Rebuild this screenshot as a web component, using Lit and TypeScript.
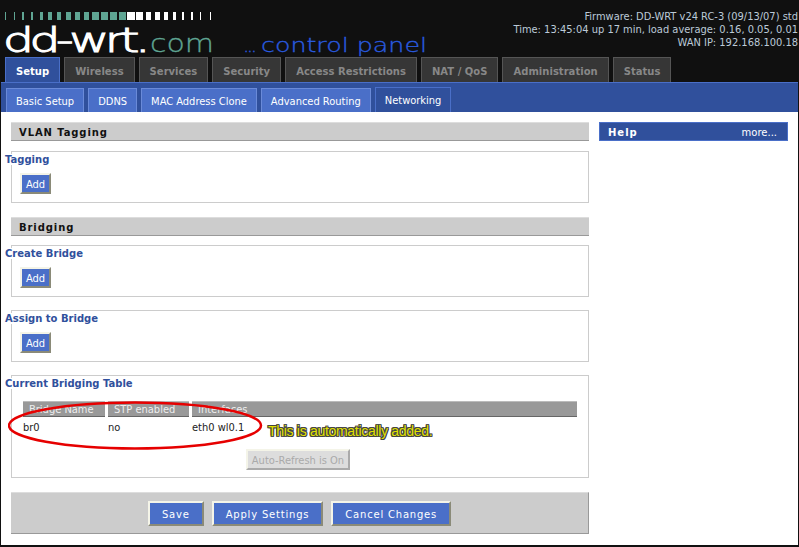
import { LitElement, html, css, svg } from "lit";
import { customElement } from "lit/decorators.js";

const mainTabs = ["Setup", "Wireless", "Services", "Security", "Access Restrictions", "NAT / QoS", "Administration", "Status"];
const subTabs = ["Basic Setup", "DDNS", "MAC Address Clone", "Advanced Routing", "Networking"];

// x, width of the ticks above the logo
const ticks = [
  [5, 1], [14, 1], [22, 2], [31, 2], [40, 3], [48, 4], [57, 4], [66, 5], [75, 5], [84, 5], [92, 7], [101, 7], [110, 7], [119, 7],
  [127, 8], [136, 7], [146, 5], [155, 5], [164, 4], [173, 3], [182, 2], [191, 2], [200, 1], [210, 1],
];

@customElement("app-root")
export class AppRoot extends LitElement {
  static styles = css`
    :host {
      display: block;
      width: 799px;
      height: 547px;
      box-sizing: border-box;
      overflow: hidden;
      background: #111;
      font-family: "DejaVu Sans", Verdana, sans-serif;
      font-size: 10px;
      color: #222;
    }

    .header {
      height: 82px;
      background: #101010;
      position: relative;
    }

    .logo {
      position: absolute;
      left: 0;
      top: 0;
    }

    .info {
      position: absolute;
      right: 1px;
      top: 10px;
      text-align: right;
      color: #bccad8;
      font-stretch: condensed;
      font-size: 11px;
      line-height: 13px;
    }

    .main-tabs {
      position: absolute;
      left: 5px;
      bottom: 0;
      display: flex;
      gap: 4px;
      align-items: flex-end;
    }

    .main-tab {
      height: 24px;
      padding: 0 10px;
      line-height: 27px;
      background: #363636;
      border: 1px solid #555;
      border-bottom: none;
      font-weight: bold;
      font-size: 10px;
      letter-spacing: 0.02px;
      color: #888;
      white-space: nowrap;
    }

    .main-tab.active {
      background: #30509c;
      border-color: #4a6fc8;
      color: #fff;
    }

    .page {
      margin: 0 1px 2px 1px;
      height: 463px;
      background: #fff;
    }

    .sub-band {
      padding: 5px 0 0 5px;
      box-sizing: border-box;
      height: 30px;
      background: #30509c;
      border-top: 1px solid #4a6fc8;
      display: flex;
      gap: 4px;
      align-items: flex-end;
    }

    .sub-tab {
      height: 23px;
      padding: 0 9px;
      line-height: 26px;
      background: #4a6fc8;
      border: 1px solid #6a8ad8;
      border-bottom: none;
      color: #fff;
      font-stretch: condensed;
      font-size: 11px;
      white-space: nowrap;
    }

    .sub-tab.active {
      background: #30509c;
      border-color: #4a6fc8;
      height: 24px;
    }

    .body {
      display: flex;
      position: relative;
      padding: 10px 10px 0 10px;
    }

    .main {
      width: 578px;
    }

    .side {
      width: 189px;
      margin-left: 10px;
    }

    .help {
      height: 19px;
      box-sizing: border-box;
      border: 1px solid #4a6fc8;
      background: #30509c;
      color: #fff;
      display: flex;
      justify-content: space-between;
      align-items: center;
      padding: 1px 10px 0 8px;
    }

    .help b {
      font-size: 10px;
      letter-spacing: 1px;
    }

    .heading {
      height: 19px;
      box-sizing: border-box;
      background: #ccc;
      border-top: 1px solid #ddd;
      border-bottom: 1px solid #999;
      padding-left: 8px;
      line-height: 19px;
      font-size: 10px;
      font-weight: bold;
      letter-spacing: 0.9px;
      color: #111;
    }

    .heading.second {
      margin-top: 14px;
    }

    .group {
      border: 1px solid #ccc;
      margin-top: 9px;
      height: 52px;
      box-sizing: border-box;
      padding-top: 2px;
    }

    .group.first {
      margin-top: 10px;
    }

    .group.spaced {
      margin-top: 13px;
    }

    .group.tall {
      height: 103px;
    }

    .legend {
      width: fit-content;
      margin-left: -7px;
      padding-right: 2px;
      background: #fff;
      color: #30509c;
      font-size: 10px;
      font-weight: bold;
      line-height: 11px;
    }

    .btn {
      display: block;
      box-sizing: border-box;
      background: #4a6fc8;
      color: #fff;
      border: 2px solid;
      border-color: #f4f4e8 #8a8a78 #8a8a78 #f4f4e8;
      font: inherit;
      padding: 1px 0 0;
    }

    .add {
      width: 31px;
      height: 21px;
      margin: 8px 0 0 8px;
      font-stretch: condensed;
      font-size: 11px;
    }

    table {
      border-collapse: separate;
      border-spacing: 3px 0;
      margin: 12px 0 0 8px;
      width: 560px;
      table-layout: fixed;
    }

    .col-name {
      width: 82px;
    }

    .col-stp {
      width: 81px;
    }

    th {
      height: 16px;
      padding: 0 0 0 6px;
      box-sizing: border-box;
      background: #999;
      color: #eee;
      border-top: 1px solid #bbb;
      border-bottom: 1px solid #666;
      font-stretch: condensed;
      font-size: 11px;
      font-weight: normal;
      text-align: left;
    }

    td {
      height: 20px;
      padding: 0;
      font-stretch: condensed;
      font-size: 11px;
      color: #222;
    }

    .refresh {
      width: 104px;
      height: 21px;
      margin: 12px 0 0 234px;
      background: #ddd;
      color: #aaa;
      border-color: #f4f4e8 #aaa #aaa #f4f4e8;
      font-stretch: condensed;
      font-size: 11px;
    }

    .footer {
      height: 42px;
      margin-top: 14px;
      padding-top: 1px;
      box-sizing: border-box;
      background: #ccc;
      border-top: 1px solid #ddd;
      border-bottom: 1px solid #999;
      border-right: 1px solid #999;
      display: flex;
      justify-content: center;
      gap: 8px;
      align-items: center;
    }

    .footer .btn {
      height: 25px;
      padding: 1px 12px 0;
      font-size: 10px;
      letter-spacing: 0.8px;
    }

    .ellipse {
      position: absolute;
      left: 7px;
      top: 288px;
    }

    .note {
      position: absolute;
      left: 267px;
      top: 311px;
      font-family: "Liberation Sans", Arial, sans-serif;
      font-size: 14px;
      letter-spacing: -0.3px;
      color: #e0e000;
      text-shadow: -1px 0 #444, 1px 0 #444, 0 -1px #444, 0 1px #444, 1px 1px #444, -1px -1px #444, 1px -1px #444, -1px 1px #444;
      white-space: nowrap;
    }
  `;

  private _logo() {
    return svg`
      <svg class="logo" width="440" height="60" xmlns="http://www.w3.org/2000/svg" font-family="DejaVu Sans" font-weight="200">
        ${ticks.map(
          ([x, w], i) => svg`<rect x=${x} y="12" width=${w} height="8" fill=${i < 14 ? "#5fa593" : "#fff"}></rect>`,
        )}
        <text transform="translate(3 52) scale(1.48 1)" font-size="33" letter-spacing="-3" fill="#fff" stroke="#fff" stroke-width="1.1">dd-wrt.</text>
        <text transform="translate(150 52) scale(1.25 1)" font-size="24" fill="#5fa593" stroke="#5fa593" stroke-width="0.3">com</text>
        <text x="243" y="52" font-size="20" letter-spacing="-2.5" fill="#2a5ce0" stroke="#2a5ce0" stroke-width="0.3">...</text>
        <text x="261" y="52" font-size="20" fill="#2a5ce0" stroke="#2a5ce0" stroke-width="0.3" textLength="166" lengthAdjust="spacingAndGlyphs">control panel</text>
      </svg>
    `;
  }

  render() {
    return html`
      <div class="header">
        ${this._logo()}
        <div class="info">
          Firmware: DD-WRT v24 RC-3 (09/13/07) std<br />
          Time: 13:45:04 up 17 min, load average: 0.16, 0.05, 0.01<br />
          WAN IP: 192.168.100.18
        </div>
        <div class="main-tabs">
          ${mainTabs.map((t, i) => html`<div class="main-tab ${i === 0 ? "active" : ""}">${t}</div>`)}
        </div>
      </div>
      <div class="page">
        <div class="sub-band">
          ${subTabs.map((t, i) => html`<div class="sub-tab ${i === 4 ? "active" : ""}">${t}</div>`)}
        </div>
        <div class="body">
          <div class="main">
            <div class="heading">VLAN Tagging</div>
            <div class="group first">
              <div class="legend">Tagging</div>
              <button class="btn add">Add</button>
            </div>
            <div class="heading second">Bridging</div>
            <div class="group">
              <div class="legend">Create Bridge</div>
              <button class="btn add">Add</button>
            </div>
            <div class="group spaced">
              <div class="legend">Assign to Bridge</div>
              <button class="btn add">Add</button>
            </div>
            <div class="group spaced tall">
              <div class="legend">Current Bridging Table</div>
              <table>
                <colgroup>
                  <col class="col-name" />
                  <col class="col-stp" />
                  <col />
                </colgroup>
                <tr><th>Bridge Name</th><th>STP enabled</th><th>Interfaces</th></tr>
                <tr><td>br0</td><td>no</td><td>eth0 wl0.1</td></tr>
              </table>
              <button class="btn refresh">Auto-Refresh is On</button>
            </div>
            <div class="footer">
              <button class="btn">Save</button>
              <button class="btn">Apply Settings</button>
              <button class="btn">Cancel Changes</button>
            </div>
          </div>
          <div class="side">
            <div class="help"><b>Help</b><span>more...</span></div>
          </div>
          <svg class="ellipse" width="258" height="52">
            <ellipse cx="127" cy="25.5" rx="126" ry="23" fill="none" stroke="#e60000" stroke-width="2.5"></ellipse>
          </svg>
          <div class="note">This is automatically added.</div>
        </div>
      </div>
    `;
  }
}
